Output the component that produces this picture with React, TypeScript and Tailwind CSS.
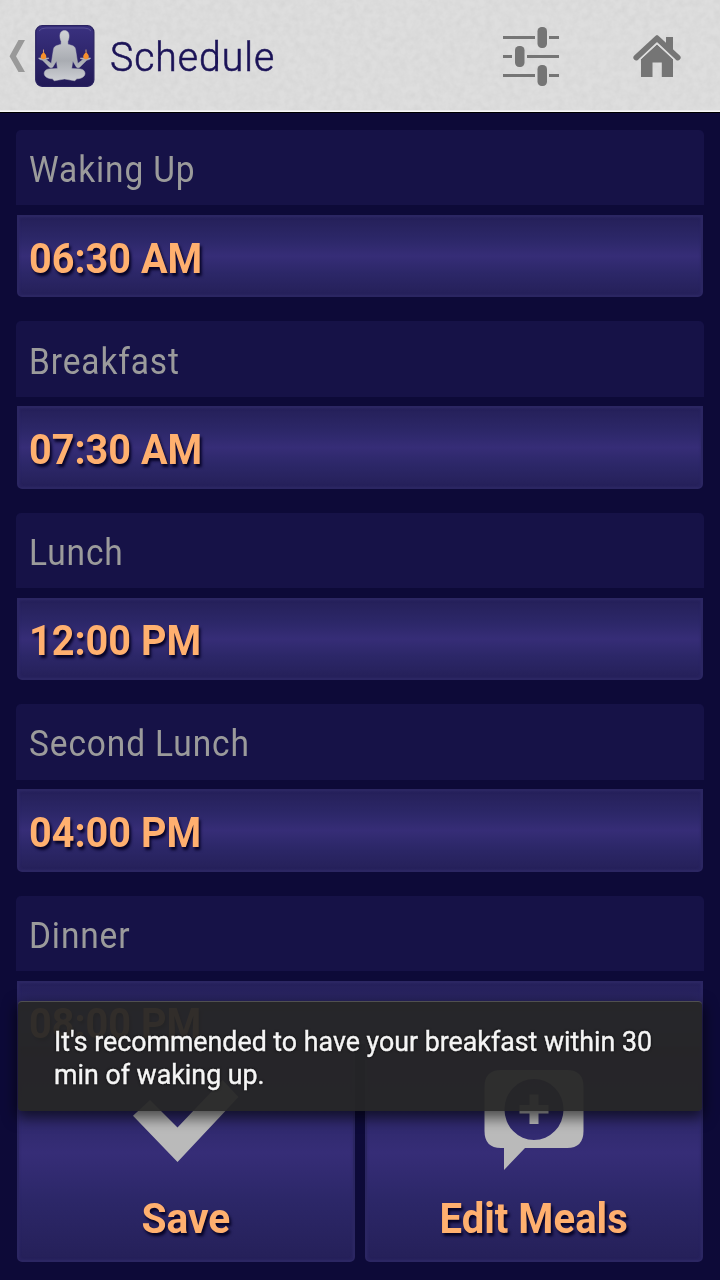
import React from "react";

const meals = [
  { label: "Waking Up", time: "06:30 AM" },
  { label: "Breakfast", time: "07:30 AM" },
  { label: "Lunch", time: "12:00 PM" },
  { label: "Second Lunch", time: "04:00 PM" },
  { label: "Dinner", time: "08:00 PM" },
];

const panel =
  "border-2 border-[#2b2662] bg-[linear-gradient(to_bottom,#252059,#2c2768_28%,#362d77_50%,#2c2768_72%,#252059)] shadow-[inset_0_0_3px_#2e2868]";
const accent =
  "font-bold text-[#ffb06f] [text-shadow:2px_3px_3px_#060326]";

function PaperTexture() {
  return (
    <svg className="absolute inset-x-0 top-0 h-[110px] w-full" aria-hidden="true">
      <filter id="paper" x="0" y="0" width="100%" height="100%">
        <feTurbulence type="fractalNoise" baseFrequency="0.14" numOctaves="3" seed="4" />
        <feColorMatrix values="0 0 0 0 0.4  0 0 0 0 0.4  0 0 0 0 0.4  0.22 0.1 0 0 -0.11" />
      </filter>
      <rect width="720" height="110" filter="url(#paper)" />
    </svg>
  );
}

function AppLogo() {
  return (
    <svg className="h-[62px] w-[60px]" viewBox="0 0 60 62">
      <defs>
        <linearGradient id="tile" x1="0" y1="0" x2="0" y2="1">
          <stop offset="0" stopColor="#3a3180" />
          <stop offset="1" stopColor="#211956" />
        </linearGradient>
        <linearGradient id="body" x1="0" y1="0" x2="0" y2="1">
          <stop offset="0" stopColor="#d0d2d6" />
          <stop offset="0.6" stopColor="#a9acb2" />
          <stop offset="1" stopColor="#cdcfd4" />
        </linearGradient>
      </defs>
      <rect x="0.7" y="0.7" width="58.2" height="60.6" rx="6.5" fill="url(#tile)" stroke="#2a2361" strokeWidth="1.2" />
      <path d="M4 6q2-3 7-3h38q5 0 7 3" fill="none" stroke="#5f589a" strokeWidth="0.8" />
      <path
        fill="url(#body)"
        stroke="#b9bbc2"
        strokeWidth="0.5"
        d="M29.500 5.500c-3 0-4.600 2.300-4.600 5.200 0 2.500.6 4.400 1.200 5.500v3l-4.900 1.600c-1.800.8-2.500 2-2.800 4L16.300 38.500l-5.600-4.200c2-.2 3-.6 3.300-1.300H3.500c.5 1.200 2 1.800 4 2.200l7 7c1.400 1.200 3 .6 3.700-.8l3.300-5.600 1 7.700-8.500.4c-3 .4-5 2.200-4.800 4.800.4 3.300 4 5.100 8.200 5.100l1.800 2 10.300-1.800 10.300 1.800 2-2c4.200 0 7.800-1.800 8.200-5.100.2-2.600-1.800-4.400-4.800-4.800l-8.500-.4 1-7.700 3.300 5.600c.7 1.400 2.300 2 3.700.8l7-7c2-.4 3.500-1 4-2.200H45.200c.3.700 1.100 1.100 3.100 1.300l-5.600 4.200L40.600 24.800c-.3-2-1-3.200-2.800-4l-4.900-1.600v-3c.6-1.100 1.200-3 1.200-5.500C34.100 7.800 32.500 5.500 29.500 5.500Z"
      />
      <path d="M8.500 26.500c-.2 2-2.800 2.600-2.800 5a2.800 2.800 0 0 0 5.600 0c0-2.300-2-3-2.800-5ZM51 26.500c-.2 2-2.800 2.600-2.800 5a2.800 2.800 0 0 0 5.600 0c0-2.300-2-3-2.800-5Z" fill="#f7902c" />
      <path d="M8.500 24.500V27M51 24.500V27" stroke="#e9b487" strokeWidth="0.8" />
    </svg>
  );
}

function Header() {
  return (
    <header className="relative h-[113px] shrink-0 border-b border-black bg-[#dedede] shadow-[inset_0_-1.5px_0_#f8f8f8]">
      <PaperTexture />
      <div className="relative flex h-full items-center">
        <svg className="ml-2 h-[34px] w-[18px]" viewBox="0 0 18 34">
          <path d="M10.500 1H17L8 17.200 17 33H10.500L1.500 17.200Z" fill="#999" />
        </svg>
        <div className="ml-[9px]"><AppLogo /></div>
        <h1 className="relative top-[2px] ml-[15px] origin-left scale-x-[0.955] text-[41px] font-light tracking-[1px] whitespace-nowrap text-[#1b1357] [-webkit-text-stroke:0.6px_#1b1357]">Schedule</h1>
        <svg className="absolute top-[26px] left-[502px] h-[60px] w-[58px]" viewBox="0 0 58 60" fill="#757575">
          <path d="M1 10h32v3H1zM47 10h10v3H47zM1 29h9v3H1zM25 29h32v3H25zM1 48h32v3H1zM47 48h10v3H47z" />
          <rect x="35.500" y="1" width="9.500" height="21" rx="4.200" />
          <rect x="13" y="20" width="9.500" height="21" rx="4.200" />
          <rect x="35.500" y="39" width="9.500" height="21" rx="4.200" />
        </svg>
        <svg className="absolute top-[34px] left-[632px] h-[44px] w-[50px]" viewBox="0 0 50 44" fill="#757575">
          <path d="M34 3h7v14l-7-7Z" />
          <path d="M25 10.300 41 25v18H29.800V28.500h-9.300V43H9V25Z" />
          <path d="M25 4.300 4.200 23.600M25 4.300 45.800 23.600" fill="none" stroke="#757575" strokeWidth="5.600" strokeLinecap="round" />
          <path d="M7.500 25.800 25 9.600 42.500 25.800" fill="none" stroke="#dedede" strokeWidth="1.200" />
        </svg>
      </div>
    </header>
  );
}

function MealRow({ label, time }: { label: string; time: string }) {
  return (
    <div className="h-[191.4px] shrink-0">
      <div className="flex h-[75.400px] items-center rounded-t-[5px] bg-[#161247] pl-[13px]">
        <span className="relative top-[2.500px] origin-left scale-x-[0.93] text-[36px] tracking-[0.95px] text-[#9b9b9b]">{label}</span>
      </div>
      <div className={`mr-[1px] ml-[0.5px] mt-[9.600px] flex h-[82.400px] items-center rounded-b-[5px] pl-[10px] ${panel}`}>
        <span className={`relative top-[2.500px] origin-left scale-x-[0.943] text-[42px] leading-[36px] ${accent}`}>{time}</span>
      </div>
    </div>
  );
}

export default function App() {
  return (
    <div className="relative flex h-[1280px] w-[720px] flex-col overflow-hidden bg-[#0d0a38] font-[Roboto,sans-serif]">
      <Header />
      <main className="flex h-[931px] shrink-0 flex-col overflow-hidden px-4 pt-[17px]">
        {meals.map((m) => (
          <MealRow key={m.label} {...m} />
        ))}
      </main>
      <div className="grid h-[218px] shrink-0 grid-cols-2 gap-[9.500px] pr-[17px] pl-[16.500px]">
        <button className={`flex flex-col items-center rounded-b-[5px] ${panel}`}>
          <svg className="mt-[26px] h-[92px] w-[106px]" viewBox="0 0 106 92">
            <path d="M0 43.700 17 28 44.500 55.500 89.500 8 105.500 25 44.500 90Z" fill="#bababa" />
          </svg>
          <span className={`mt-[25px] scale-x-[0.97] text-[42px] leading-[60px] ${accent}`}>Save</span>
        </button>
        <button className={`flex flex-col items-center rounded-b-[5px] ${panel}`}>
          <svg className="mt-[24px] h-[102px] w-[100px]" viewBox="0 0 100 102">
            <path
              fill="#bababa"
              fillRule="evenodd"
              d="M17 0H83Q99.500 0 99.500 17V61Q99.500 78 83 78H41L20 100V78H17Q.5 78 .5 61V17Q.5 0 17 0ZM50 9A29.500 30.500 0 1 0 50 70A29.500 30.500 0 1 0 50 9ZM45.500 24.500H54.500V35H64.500V43.500H54.500V54H45.500V43.500H35.500V35H45.500Z"
            />
          </svg>
          <span className={`mt-[17px] scale-x-[0.955] text-[42px] leading-[60px] ${accent}`}>Edit Meals</span>
        </button>
      </div>
      <div className="absolute top-[1001px] left-[18px] h-[110px] w-[684px] rounded-[4px] border-t border-[#505050] bg-[#262626]/95 pt-[23px] pl-[36px] shadow-[0_5px_14px_2px_rgba(0,0,0,0.6)]">
        <p className="origin-left scale-x-[0.956] text-[28px] leading-[33px] whitespace-nowrap text-[#f5f5f5] [-webkit-text-stroke:0.4px_#f5f5f5] [text-shadow:0_0_3px_#000]">
          It's recommended to have your breakfast within 30
          <br />
          min of waking up.
        </p>
      </div>
    </div>
  );
}
